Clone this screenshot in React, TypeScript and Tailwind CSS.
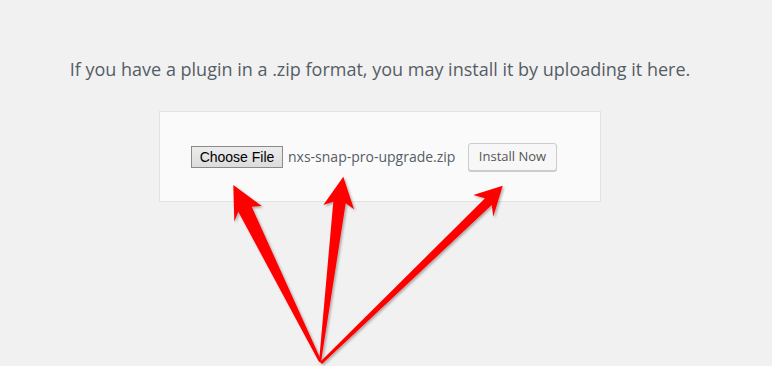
export default function App() {
  return (
    <div className="relative w-[772px] h-[366px] overflow-hidden bg-[#f1f1f1]" style={{ fontFamily: '"Open Sans", sans-serif' }}>
      <div className="w-[760px] flex flex-col items-center pt-[55px]">
        <p className="text-[18px] leading-[28px] text-[#555d66]">
          If you have a plugin in a .zip format, you may install it by uploading it here.
        </p>
        <div className="mt-[28px] w-[442px] h-[91px] border border-[#e2e2e2] bg-[#fafafa] flex items-center pl-[31px]">
          <button className="h-[22px] w-[92px] border border-[#8a8a8a] bg-gradient-to-b from-[#ececec] to-[#dcdcdc] text-[14px] text-black leading-none" style={{ fontFamily: '"Liberation Sans", Arial, sans-serif' }}>
            Choose File
          </button>
          <span className="ml-[5px] text-[14px] text-[#555d66] leading-none">nxs-snap-pro-upgrade.zip</span>
          <button className="ml-auto mr-[43px] h-[28px] w-[89px] rounded-[3px] border border-[#cccccc] bg-[#f7f7f7] shadow-[0_1px_0_#cccccc] text-[13px] text-[#555555] leading-none">
            Install Now
          </button>
        </div>
      </div>
      <svg className="absolute left-0 top-0 pointer-events-none" width="772" height="366" viewBox="0 0 772 366">
        <defs>
          <filter id="sh" x="-20%" y="-20%" width="140%" height="140%">
            <feDropShadow dx="1.5" dy="1.5" stdDeviation="1" floodColor="#000" floodOpacity="0.3" />
          </filter>
        </defs>
        <g fill="#ff0000" filter="url(#sh)">
          <polygon points="233.3,185 261.7,206 251.7,206.7 321.5,361 318.5,361 238.3,211.7 234.3,221.7" />
          <polygon points="343.3,176.7 354,209.3 345.7,203.3 321,362 319,362 333.3,201.7 323.3,205" />
          <polygon points="502.7,185.7 493.3,216.7 491.7,205 322,364 320,362 485,198.3 473.3,195" />
        </g>
      </svg>
    </div>
  );
}
